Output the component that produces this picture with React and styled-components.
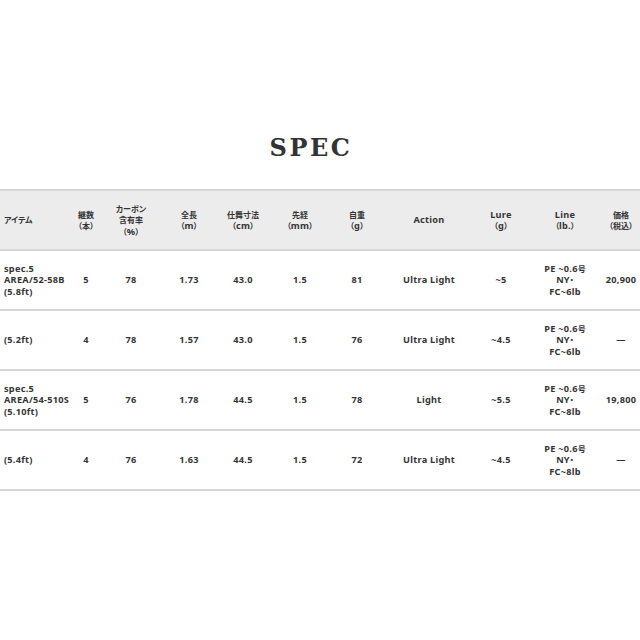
import styled, { createGlobalStyle } from "styled-components"

const GlobalStyle = createGlobalStyle`
  html, body {
    margin: 0;
    padding: 0;
    background: #fff;
    overflow: hidden;
  }
  body {
    font-family: "Noto Sans", "Noto Sans CJK JP", sans-serif;
    color: #353535;
  }
`

// anchos de columna: la tabla es más ancha que la ventana y se corta por los lados
const COLUMNAS = "83px 26px 64px 52px 56px 58px 56px 88px 56px 72px 40px"

const Pagina = styled.div`
  width: 640px;
  height: 640px;
  overflow: hidden;
`

const Titulo = styled.h2`
  margin: 133px 0 26px;
  padding-right: 18px;
  font-family: "DejaVu Serif", serif;
  font-size: 24px;
  line-height: 30px;
  font-weight: 700;
  letter-spacing: 2.5px;
  text-align: center;
  color: #333;
`

const Tabla = styled.div`
  width: 651px;
  margin-left: -10px;
  border-top: 2px solid #d6d6d6;
`

const Fila = styled.div`
  display: grid;
  grid-template-columns: ${COLUMNAS};
  height: 58px;
  border-bottom: 2px solid #d6d6d6;
  background: ${p => (p.$cabecera ? "#ececec" : "#fff")};
`

const Celda = styled.div`
  display: flex;
  flex-direction: column;
  justify-content: center;
  align-items: ${p => (p.$izq ? "flex-start" : "center")};
  padding-left: ${p => (p.$izq ? "14px" : "0")};
  text-align: ${p => (p.$izq ? "left" : "center")};
  font-size: 9.2px;
  line-height: 11.5px;
  font-weight: 700;
  letter-spacing: 0.25px;
  white-space: nowrap;
`

const Jp = styled.span`
  font-family: "Noto Sans CJK JP", sans-serif;
  font-size: 8px;
  font-weight: 700;
  font-feature-settings: "palt";
  letter-spacing: 0;
`

const Par = ({ children }) => (
  <span>
    <Jp>（</Jp>{children}<Jp>）</Jp>
  </span>
)

const cabecera = [
  [<Jp key="a">アイテム</Jp>],
  [<Jp key="a">継数</Jp>, <Par key="b"><Jp>本</Jp></Par>],
  [<Jp key="a">カーボン</Jp>, <Jp key="b">含有率</Jp>, <Par key="c">%</Par>],
  [<Jp key="a">全長</Jp>, <Par key="b">m</Par>],
  [<Jp key="a">仕舞寸法</Jp>, <Par key="b">cm</Par>],
  [<Jp key="a">先経</Jp>, <Par key="b">mm</Par>],
  [<Jp key="a">自重</Jp>, <Par key="b">g</Par>],
  ["Action"],
  ["Lure", <Par key="b">g</Par>],
  ["Line", <Par key="b">lb.</Par>],
  [<Jp key="a">価格</Jp>, <Par key="b"><Jp>税込</Jp></Par>],
]

const linea = lb => [
  <span key="a">PE ~0.6<Jp>号</Jp></span>,
  <span key="b">NY<Jp>・</Jp></span>,
  `FC~${lb}lb`,
]

const modelos = [
  { item: ["spec.5", "AREA/52-58B", "(5.8ft)"], datos: ["5", "78", "1.73", "43.0", "1.5", "81", "Ultra Light", "~5"], lb: 6, precio: "20,900" },
  { item: ["(5.2ft)"], datos: ["4", "78", "1.57", "43.0", "1.5", "76", "Ultra Light", "~4.5"], lb: 6, precio: "—" },
  { item: ["spec.5", "AREA/54-510S", "(5.10ft)"], datos: ["5", "76", "1.78", "44.5", "1.5", "78", "Light", "~5.5"], lb: 8, precio: "19,800" },
  { item: ["(5.4ft)"], datos: ["4", "76", "1.63", "44.5", "1.5", "72", "Ultra Light", "~4.5"], lb: 8, precio: "—" },
]

const App = () => {
  return (
    <Pagina>
      <GlobalStyle />
      <Titulo>SPEC</Titulo>

      <Tabla>
        <Fila $cabecera>
          {cabecera.map((lineas, i) => (
            <Celda key={i} $izq={i === 0}>
              {lineas.map((l, j) => <div key={j}>{l}</div>)}
            </Celda>
          ))}
        </Fila>

        {modelos.map((m, i) => (
          <Fila key={i}>
            <Celda $izq>
              {m.item.map(t => <div key={t}>{t}</div>)}
            </Celda>
            {m.datos.map((d, j) => <Celda key={j}>{d}</Celda>)}
            <Celda>
              {linea(m.lb).map((l, j) => <div key={j}>{l}</div>)}
            </Celda>
            <Celda>{m.precio}</Celda>
          </Fila>
        ))}
      </Tabla>
    </Pagina>
  )
}

export default App
